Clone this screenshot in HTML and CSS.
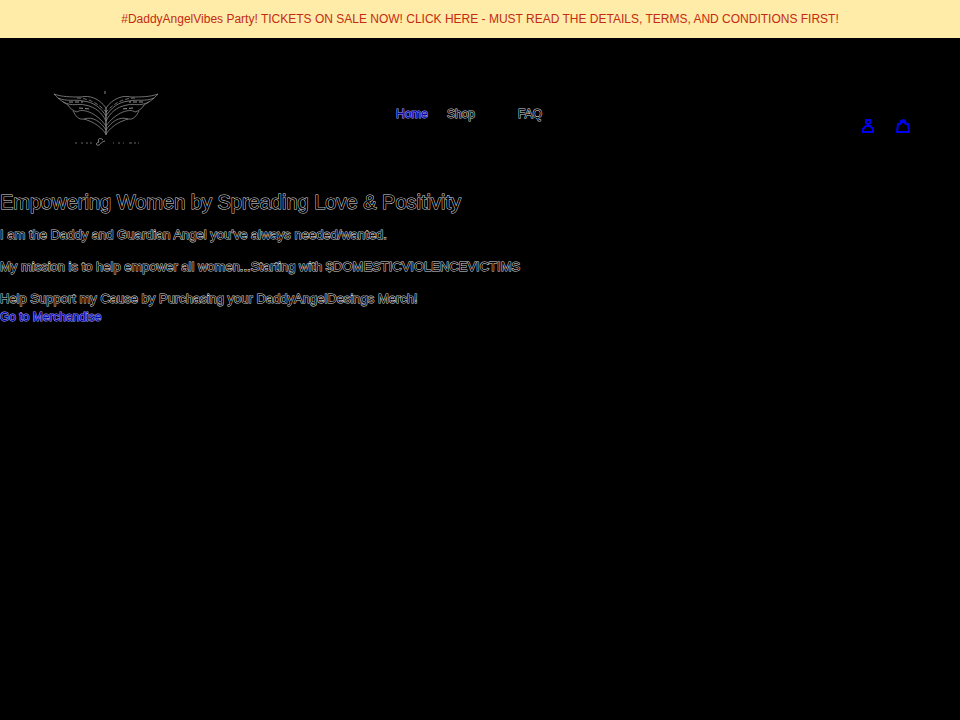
FILE: index.html
```
<!DOCTYPE html>
<html lang="en">
<head>
  <meta charset="UTF-8">
  <meta name="viewport" content="width=device-width, initial-scale=1">
  <title>Daddy Angel</title>
  <link rel="stylesheet" href="styles.css">
</head>
<body>
  <a class="announcement" href="#">#DaddyAngelVibes Party! TICKETS ON SALE NOW! CLICK HERE - MUST READ THE DETAILS, TERMS, AND CONDITIONS FIRST!</a>

  <header class="header">
    <a class="logo" href="#" aria-label="Home page">
      <svg width="108" height="60" viewBox="0 0 108 60" fill="none" stroke="#8a8a8a" stroke-width="0.8">
        <defs>
          <g id="wing">
            <path d="M53 45 V18 C46 8 36 5 28 7 C18 7 9 7 1 4 C6 10 12 13 15 15"/>
            <path d="M5 8 C14 12 22 9 30 11 C41 12 48 18 53 26"/>
            <path d="M10 12 C20 17 25 13 32 15 C43 17 49 23 53 31"/>
            <path d="M15 15 C17 19 21 21 24 22 C29 18 43 22 53 36"/>
            <path d="M20 21 C23 26 25 30 31 29 C40 26 48 32 53 40"/>
            <path d="M31 29 C37 31 46 34 53 44"/>
            <path d="M24 8 C36 8 46 14 53 22" stroke-dasharray="4 2"/>
            <path d="M16 12 L30 12 M26 18 L37 19" stroke="#bbb" stroke-dasharray="4 2"/>
          </g>
        </defs>
        <use href="#wing"/>
        <use href="#wing" transform="translate(106 0) scale(-1 1)"/>
        <path d="M52 1 v3" stroke="#aaa"/>
        <path d="M22 53 h2 M28 53 h2 M33 53 h2 M37 53 h2 M60 53 h1 M65 53 h2 M70 53 h1 M76 53 h3 M81 53 h2 M85 53 h1" stroke="#666" stroke-width="1"/>
        <path d="M50 50 C47 47 44 49 46 52 C42 53 43 56 46 55 C48 54 48 52 52 51" stroke="#aaa"/>
      </svg>
    </a>
    <nav class="nav">
      <a class="nav-link active" href="#">Home</a>
      <a class="nav-link shop" href="#">Shop</a>
      <a class="nav-link" href="#">FAQ</a>
    </nav>
    <div class="header-icons">
      <a href="#" aria-label="Log in">
        <svg width="14" height="18" viewBox="0 0 14 18" fill="none" stroke="#0000ee" stroke-width="2">
          <path d="M3 2 H9 M4 2 V5 L8 8 M8 2 V5 L4 8"/>
          <path d="M4 8 H8 L11 11 V14 H1 V11 Z"/>
        </svg>
      </a>
      <a href="#" aria-label="Cart">
        <svg width="14" height="18" viewBox="0 0 14 18" fill="none" stroke="#0000ee" stroke-width="2">
          <path d="M1 14 L2 6 H4 L5 3 L7 2 L9 3 L10 6 H12 L13 14 Z M4 6 L7 3 L10 6"/>
        </svg>
      </a>
    </div>
  </header>

  <main class="content">
    <h1>Empowering Women by Spreading Love &amp; Positivity</h1>
    <p>I am the Daddy and Guardian Angel you've always needed/wanted.</p>
    <p>My mission is to help empower all women...Starting with $DOMESTICVIOLENCEVICTIMS</p>
    <p>Help Support my Cause by Purchasing your DaddyAngelDesings Merch!</p>
    <a class="merch-link" href="#">Go to Merchandise</a>
  </main>
</body>
</html>
```
FILE: styles.css
```
body {
  margin: 0;
  background-color: #000;
  color: #000;
  font-family: "Liberation Sans", Arial, sans-serif;
  font-size: 13px;
  line-height: 18px;
}
a {
  text-decoration: none;
}
svg {
  display: block;
}
.announcement {
  display: block;
  padding: 10px;
  background-color: #ffeca8;
  color: #c42b12;
  font-size: 12px;
  text-align: center;
}
.header {
  display: grid;
  grid-template-columns: 1fr auto 1fr;
  align-items: center;
  padding: 52px 50px 40px;
}
.logo {
  justify-self: start;
  padding: 0 3px;
}
.nav {
  display: flex;
  gap: 19px;
  padding-right: 22px;
  padding-bottom: 12px;
}
.nav-link,
.content {
  color: #000;
  -webkit-text-stroke: 1px #d8d8d8;
  paint-order: stroke fill;
}
.nav-link {
  font-size: 12px;
}
.shop {
  padding-right: 24px;
}
.nav-link.active,
.merch-link {
  color: #0000b0;
  -webkit-text-stroke-color: #a0a0ff;
}
.header-icons {
  display: flex;
  gap: 20px;
  justify-self: end;
  padding-top: 14px;
}
h1 {
  margin: 0 0 12px;
  font-size: 20px;
  font-weight: normal;
  line-height: 24px;
}
.content p {
  margin: 0 0 14px;
}
.content p:nth-of-type(3) {
  margin-bottom: 0;
}
.merch-link {
  font-size: 12px;
}
```
